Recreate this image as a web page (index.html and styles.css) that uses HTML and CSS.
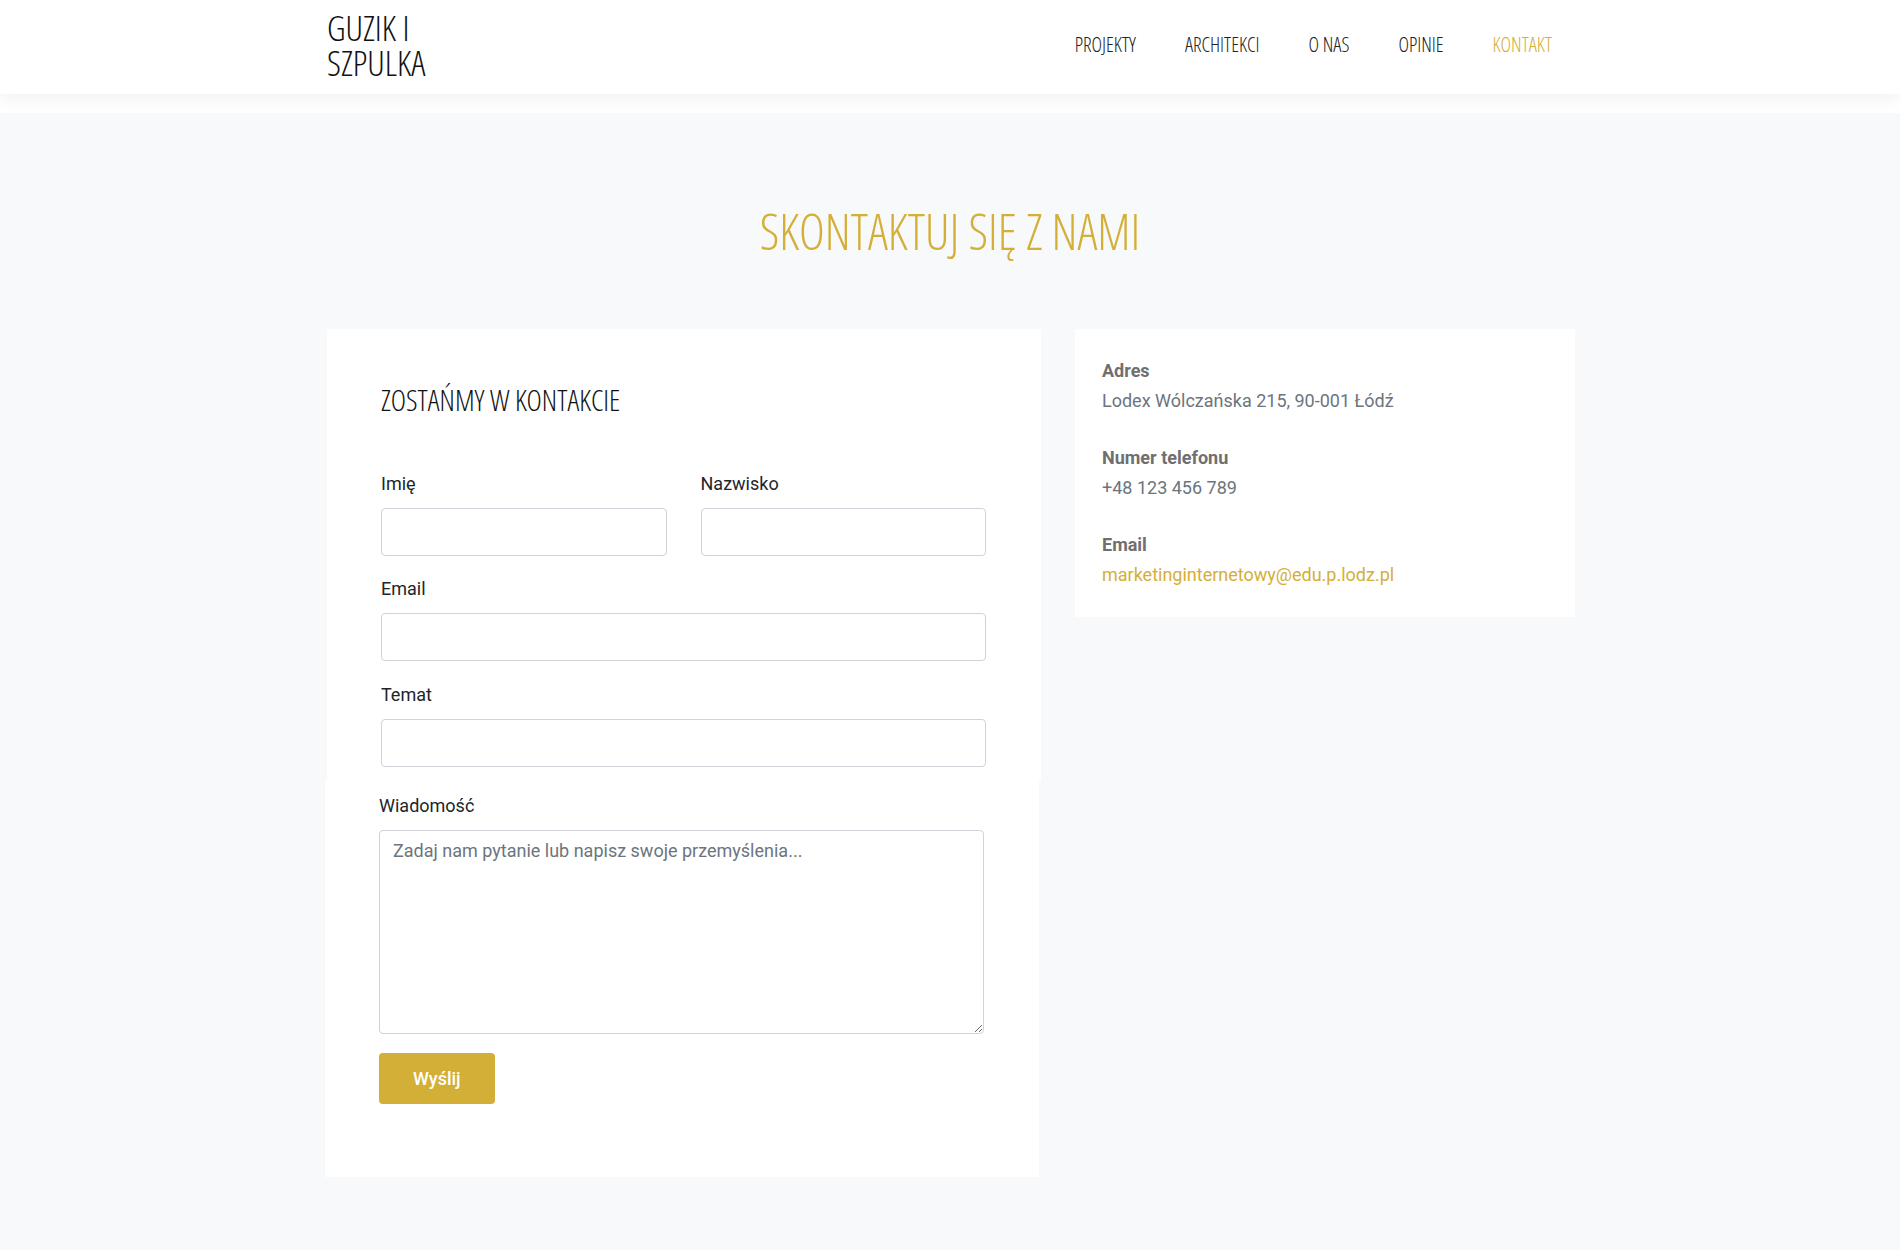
FILE: index.html
```html
<!DOCTYPE html>
<html lang="pl">
<head>
<meta charset="utf-8">
<title>Kontakt – Guzik i Szpulka</title>
<link rel="stylesheet" href="styles.css">
</head>
<body>
<header class="site-header">
  <div class="container header-inner">
    <a class="logo" href="#"><span class="logo-line">GUZIK I</span><span class="logo-line">SZPULKA</span></a>
    <nav class="main-nav">
      <a href="#">PROJEKTY</a>
      <a href="#">ARCHITEKCI</a>
      <a href="#">O NAS</a>
      <a href="#">OPINIE</a>
      <a href="#" class="active">KONTAKT</a>
    </nav>
  </div>
</header>

<main class="contact">
  <div class="container">
    <h1 class="contact-title">SKONTAKTUJ SIĘ Z NAMI</h1>
    <div class="contact-grid">
      <div class="form-col">
        <div class="form-card">
          <h2 class="form-title">ZOSTAŃMY W KONTAKCIE</h2>
          <div class="name-row">
            <div class="field">
              <label for="imie">Imię</label>
              <input id="imie" type="text">
            </div>
            <div class="field">
              <label for="nazwisko">Nazwisko</label>
              <input id="nazwisko" type="text">
            </div>
          </div>
          <div class="field">
            <label for="email">Email</label>
            <input id="email" type="email">
          </div>
          <div class="field last">
            <label for="temat">Temat</label>
            <input id="temat" type="text">
          </div>
        </div>
        <div class="form-card message-card">
          <div class="field">
            <label for="wiadomosc">Wiadomość</label>
            <textarea id="wiadomosc" placeholder="Zadaj nam pytanie lub napisz swoje przemyślenia..."></textarea>
          </div>
          <button type="button" class="send-btn">Wyślij</button>
        </div>
      </div>

      <aside class="info-card">
        <div class="info-group">
          <div class="info-label">Adres</div>
          <div class="info-value">Lodex Wólczańska 215, 90-001 Łódź</div>
        </div>
        <div class="info-group">
          <div class="info-label">Numer telefonu</div>
          <div class="info-value">+48 123 456 789</div>
        </div>
        <div class="info-group">
          <div class="info-label">Email</div>
          <a class="info-link" href="#">marketinginternetowy@edu.p.lodz.pl</a>
        </div>
      </aside>
    </div>
  </div>
</main>
</body>
</html>
```

FILE: styles.css
```css
* { box-sizing: border-box; }

html, body {
  margin: 0;
  padding: 0;
}

body {
  background: #ffffff;
  font-family: "Roboto", "Liberation Sans", sans-serif;
  color: #212529;
  font-size: 18px;
  line-height: 1.5;
}

a { text-decoration: none; }

.container {
  width: 1250px;
  margin: 0 auto;
}

/* condensed display face (stand-in for Oswald) */
.logo,
.main-nav a,
.contact-title,
.form-title {
  font-family: "Open Sans", "Roboto", sans-serif;
  font-stretch: 75%;
  font-weight: 300;
}

/* ---------- header ---------- */
.site-header {
  position: relative;
  z-index: 2;
  height: 94px;
  background: #ffffff;
  box-shadow: 0 3px 18px rgba(0, 0, 0, 0.07);
}

.header-inner {
  height: 100%;
  display: flex;
  align-items: center;
  justify-content: space-between;
}

.logo {
  display: flex;
  flex-direction: column;
  font-size: 35px;
  line-height: 35px;
  color: #111111;
  padding-left: 2px;
  margin-bottom: 5px;
}

.logo-line {
  display: block;
  height: 35px;
  white-space: nowrap;
}

.main-nav {
  display: flex;
  align-items: center;
  margin-bottom: 4px;
}

.main-nav a {
  font-size: 20px;
  line-height: 24px;
  color: #222222;
  padding: 0 24px 0 25px;
}

.main-nav a:last-child { padding-right: 23px; }

.main-nav a.active { color: #d4af37; }

/* ---------- contact section ---------- */
.contact {
  margin-top: 19px;
  background: #f8f9fa;
  padding: 94px 0 80px;
}

.contact-title {
  margin: 0 0 74px;
  text-align: center;
  font-size: 49px;
  line-height: 48px;
  color: #d4af37;
}

.contact-grid {
  display: grid;
  grid-template-columns: 716px 500px;
  column-gap: 34px;
  align-items: start;
}

.form-card {
  background: #ffffff;
  padding: 52px 55px 14px 54px;
  margin: 0 0 0 2px;
}

.message-card {
  margin: 0 2px 0 0;
  padding: 11px 55px 73px 54px;
}

.form-title {
  margin: 0 0 51px;
  font-size: 29px;
  line-height: 38px;
  color: #111111;
}

.name-row {
  display: grid;
  grid-template-columns: 1fr 1fr;
  column-gap: 34px;
}

.field {
  margin-bottom: 19.4px;
}

.field.last { margin-bottom: 0; }

.field label {
  display: block;
  font-size: 18px;
  line-height: 27px;
  margin-bottom: 11px;
  color: #212529;
}

.field input {
  display: block;
  width: 100%;
  height: 48px;
  border: 1px solid #ced4da;
  border-radius: 4px;
  background: #ffffff;
  font: inherit;
  padding: 0 13px;
}

.field textarea {
  display: block;
  width: 100%;
  height: 204px;
  border: 1px solid #ced4da;
  border-radius: 4px;
  background: #ffffff;
  font-family: "Roboto", sans-serif;
  font-size: 18px;
  line-height: 27px;
  padding: 6px 13px;
  color: #212529;
}

.field textarea::placeholder { color: #6c757d; }

.message-card .field { margin-bottom: 19px; }

.send-btn {
  display: block;
  height: 51px;
  padding: 0 34px;
  border: none;
  border-radius: 4px;
  background: #d4af37;
  color: #ffffff;
  font-family: "Roboto", sans-serif;
  font-weight: 500;
  font-size: 18px;
}

/* ---------- info card ---------- */
.info-card {
  background: #ffffff;
  padding: 27px 27px;
}

.info-group { margin-bottom: 27px; }
.info-group:last-child { margin-bottom: 0; }

.info-label {
  font-weight: 700;
  color: #6f6f6f;
  line-height: 30px;
}

.info-value {
  color: #6c757d;
  line-height: 30px;
}

.info-link {
  display: block;
  color: #d4af37;
  line-height: 30px;
}
```
